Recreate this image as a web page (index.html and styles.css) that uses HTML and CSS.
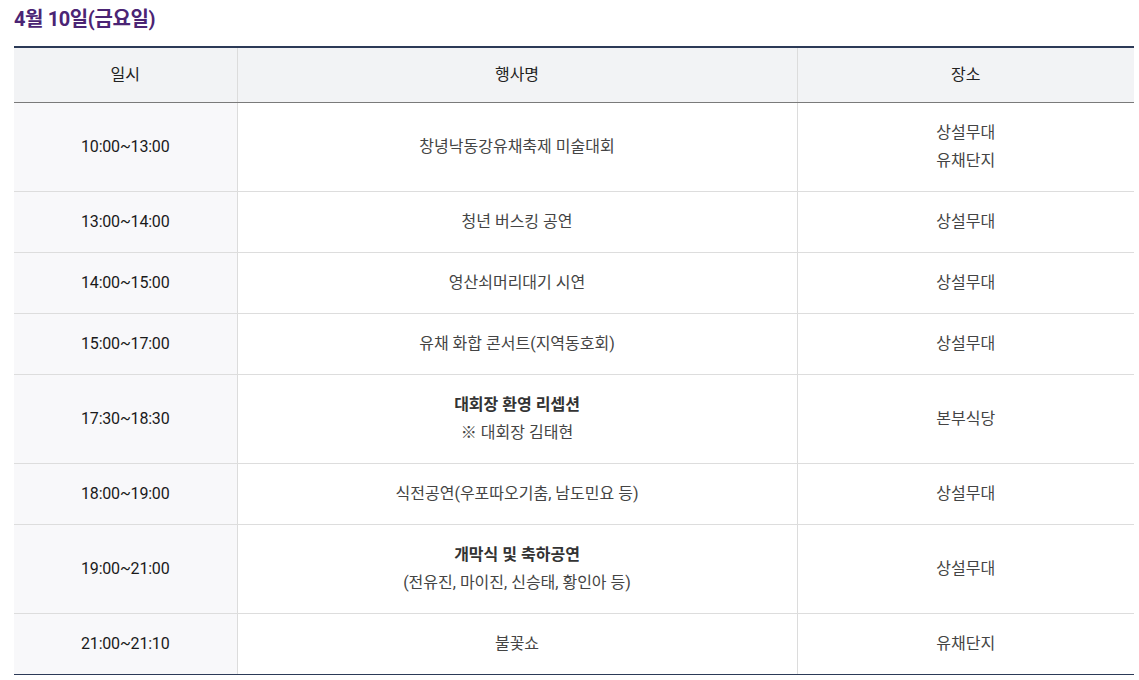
FILE: index.html
```html
<!DOCTYPE html>
<html lang="ko">
<head>
<meta charset="utf-8">
<link rel="stylesheet" href="styles.css">
</head>
<body>
<div class="wrap">
  <h2 class="day-title">4월 10일(금요일)</h2>
  <table class="schedule">
    <colgroup>
      <col class="c-time">
      <col class="c-name">
      <col class="c-place">
    </colgroup>
    <thead>
      <tr><th>일시</th><th>행사명</th><th>장소</th></tr>
    </thead>
    <tbody>
      <tr><td class="time">10:00~13:00</td><td>창녕낙동강유채축제 미술대회</td><td>상설무대<br>유채단지</td></tr>
      <tr><td class="time">13:00~14:00</td><td>청년 버스킹 공연</td><td>상설무대</td></tr>
      <tr><td class="time">14:00~15:00</td><td>영산쇠머리대기 시연</td><td>상설무대</td></tr>
      <tr><td class="time">15:00~17:00</td><td>유채 화합 콘서트(지역동호회)</td><td>상설무대</td></tr>
      <tr><td class="time">17:30~18:30</td><td><strong>대회장 환영 리셉션</strong><br>※ 대회장 김태현</td><td>본부식당</td></tr>
      <tr><td class="time">18:00~19:00</td><td>식전공연(우포따오기춤, 남도민요 등)</td><td>상설무대</td></tr>
      <tr><td class="time">19:00~21:00</td><td><strong>개막식 및 축하공연</strong><br>(전유진, 마이진, 신승태, 황인아 등)</td><td>상설무대</td></tr>
      <tr><td class="time">21:00~21:10</td><td>불꽃쇼</td><td>유채단지</td></tr>
    </tbody>
  </table>
</div>
</body>
</html>
```

FILE: styles.css
```css
html, body {
  margin: 0;
  padding: 0;
  background: #fff;
}
body {
  font-family: Roboto, "Noto Sans CJK KR", sans-serif;
  color: #444;
}
.wrap {
  padding: 6px 5px 0 14px;
}
.day-title {
  margin: 0 0 14px 0;
  font-size: 20px;
  line-height: 26px;
  font-weight: 700;
  color: #4b2474;
  letter-spacing: -0.4px;
}
.schedule {
  width: 1120px;
  border-collapse: collapse;
  table-layout: fixed;
  border-top: 2px solid #2c3a57;
  border-bottom: 1px solid #2c3a57;
  font-size: 16px;
  line-height: 28px;
}
.c-time { width: 223px; }
.c-name { width: 560px; }
.c-place { width: 337px; }
.schedule th {
  background: #f2f3f5;
  color: #222;
  font-weight: 400;
  padding: 13px 0;
  border-bottom: 1px solid #7a7a7a;
  border-left: 1px solid #dcdcdc;
}
.schedule td {
  text-align: center;
  padding: 16px 0;
  border-bottom: 1px solid #dddddd;
  border-left: 1px solid #dcdcdc;
}
.schedule th:first-child,
.schedule td:first-child {
  border-left: 0;
}
.schedule tbody tr:last-child td {
  border-bottom: 1px solid #2c3a57;
}
.schedule td.time {
  background: #f8f8fa;
  color: #1a1a1a;
  letter-spacing: -0.2px;
}
.schedule strong {
  font-weight: 700;
  color: #333;
}
```
